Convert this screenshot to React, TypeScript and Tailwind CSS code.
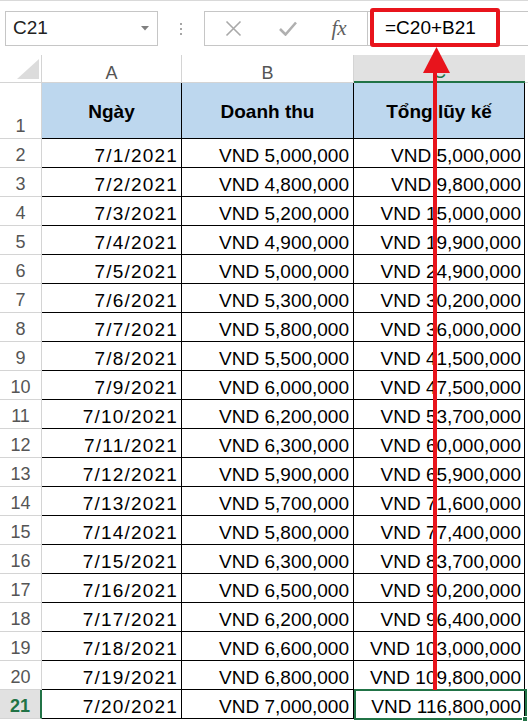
const revenue = [
  5000000, 4800000, 5200000, 4900000, 5000000, 5300000, 5800000, 5500000, 6000000, 6200000,
  6300000, 5900000, 5700000, 5800000, 6300000, 6500000, 6200000, 6600000, 6800000, 7000000,
];

const fmt = (n: number) => "VND " + n.toLocaleString("en-US");

let running = 0;
const rows = revenue.map((r, i) => {
  running += r;
  return { date: `7/${i + 1}/2021`, revenue: fmt(r), total: fmt(running) };
});

function Toolbar() {
  return (
    <div className="h-[55px] border-t border-[#d9d9d9] flex items-start pt-[10px]">
      {/* Name box */}
      <div className="ml-[5px] w-[153px] h-[35px] border border-[#c6c6c6] flex items-center justify-between pl-[7px] pr-[8px]">
        <span className="text-[19px] text-[#222]">C21</span>
        <svg width="8" height="5" viewBox="0 0 8 5">
          <polygon points="0,0 8,0 4,4.5" fill="#808080" />
        </svg>
      </div>
      {/* grip dots */}
      <div className="w-[46px] h-[35px] flex flex-col items-center justify-center gap-[3px]">
        <div className="w-[2px] h-[2px] bg-[#a6a6a6]" />
        <div className="w-[2px] h-[2px] bg-[#a6a6a6]" />
        <div className="w-[2px] h-[2px] bg-[#a6a6a6]" />
      </div>
      {/* cancel / enter / fx */}
      <div className="w-[164px] h-[35px] border border-[#c6c6c6] flex items-center">
        <div className="w-[55px] flex justify-center pl-[2px]">
          <svg width="17" height="17" viewBox="0 0 17 17">
            <path d="M1.5 1.5 L15.5 15.5 M15.5 1.5 L1.5 15.5" stroke="#a9a9a9" strokeWidth="1.6" fill="none" />
          </svg>
        </div>
        <div className="w-[55px] flex justify-center">
          <svg width="18" height="15" viewBox="0 0 18 15">
            <path d="M1 8 L6.5 13.5 L17 1.5" stroke="#b0b0b0" strokeWidth="2.6" fill="none" />
          </svg>
        </div>
        <div className="flex-1 flex justify-center pr-[4px]">
          <span className="font-['Liberation_Serif',serif] italic text-[21px] text-[#606060] leading-none">fx</span>
        </div>
      </div>
      {/* formula input */}
      <div className="flex-1 h-[35px] border-y border-[#c6c6c6] flex items-center pl-[17px]">
        <span className="text-[19px] text-black">=C20+B21</span>
      </div>
    </div>
  );
}

function ColumnHeader() {
  return (
    <div className="flex h-[28px] text-[18px] leading-[18px] text-[#555]">
      <div className="w-[42px] border-r border-b border-[#d4d4d4] flex items-end justify-end pr-[2px] pb-[3px]">
        <svg width="22" height="20" viewBox="0 0 22 20">
          <polygon points="22,0 22,20 0,20" fill="#dcdcdc" />
        </svg>
      </div>
      <div className="w-[140px] border-r border-b border-[#d4d4d4] flex items-end justify-center">A</div>
      <div className="w-[172px] border-r border-b border-[#d4d4d4] flex items-end justify-center">B</div>
      <div className="w-[171px] bg-[#e1e1e1] border-b-2 border-[#217346] flex items-end justify-center text-[#217346]">C</div>
      <div className="flex-1 border-b border-[#d4d4d4]" />
    </div>
  );
}

function App() {
  return (
    <div className="relative w-[528px] h-[722px] overflow-hidden bg-white font-['Liberation_Sans',Arial,sans-serif]">
      <Toolbar />
      <ColumnHeader />

      {/* Row 1: titles */}
      <div className="flex h-[56px]">
        <div className="w-[42px] border-r border-b border-[#d4d4d4] flex items-end justify-center pb-[3px] text-[18px] leading-[18px] text-[#555]">
          1
        </div>
        <div className="w-[140px] bg-[#bdd7ee] border-r border-b border-black flex items-center justify-center pt-[4px] text-[19px] font-bold text-black">
          Ngày
        </div>
        <div className="w-[172px] bg-[#bdd7ee] border-r border-b border-black flex items-center justify-center pt-[4px] text-[19px] font-bold text-black">
          Doanh thu
        </div>
        <div className="w-[171px] bg-[#bdd7ee] border-r border-b border-black flex items-center justify-center pt-[4px] text-[19px] font-bold text-black">
          Tổng lũy kế
        </div>
        <div className="flex-1" />
      </div>

      {rows.map((r, i) => {
        const n = i + 2;
        const last = n === 21;
        return (
          <div key={n} className="flex h-[29px] text-[19px] leading-[19px] text-black">
            <div
              className={
                last
                  ? "w-[42px] bg-[#e1e1e1] border-r-2 border-b border-r-[#217346] border-b-[#d4d4d4] flex items-end justify-center pb-[3px] text-[18px] leading-[18px] font-bold text-[#217346]"
                  : "w-[42px] border-r border-b border-[#d4d4d4] flex items-end justify-center pb-[3px] text-[18px] leading-[18px] text-[#555]"
              }
            >
              {n}
            </div>
            <div className="w-[140px] border-r border-b border-black flex items-end justify-end pr-[3px] pb-[2px] tracking-[1.2px]">
              {r.date}
            </div>
            <div className="w-[172px] border-r border-b border-black flex items-end justify-end pr-[4px] pb-[2px]">
              {r.revenue}
            </div>
            <div className="relative w-[171px] border-r border-b border-black flex items-end justify-end pr-[3px] pb-[2px]">
              {r.total}
              {last && (
                <>
                  <div className="absolute left-0 top-[-1px] w-[173px] h-[31px] border-2 border-[#217346]" />
                  <div className="absolute left-[168px] top-[26px] w-[6px] h-[6px] bg-[#217346] border border-white" />
                </>
              )}
            </div>
            <div className="flex-1" />
          </div>
        );
      })}

      {/* red callout box and arrow */}
      <div className="absolute left-[370px] top-[8px] w-[130px] h-[39px] border-[4px] border-[#e8141c] rounded-[3px]" />
      <svg className="absolute left-0 top-0 pointer-events-none" width="528" height="722" viewBox="0 0 528 722">
        <polygon points="436.5,47 423,73 450,73" fill="#e8141c" />
        <rect x="433" y="70" width="4" height="620" fill="#e8141c" />
      </svg>
    </div>
  );
}

export default App;
